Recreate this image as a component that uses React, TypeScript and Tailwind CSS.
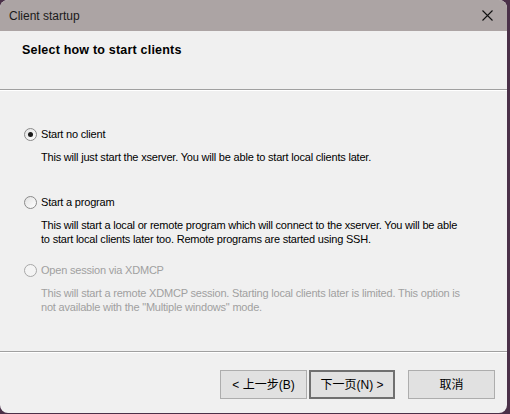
import type { ReactNode } from 'react'

const ui = { fontFamily: '"Liberation Sans", Arial, sans-serif' }
const cjk = { fontFamily: '"Liberation Sans", "Noto Sans CJK SC", sans-serif' }

const Radio = ({ checked, disabled }: { checked?: boolean; disabled?: boolean }) => (
  <span
    className={
      'relative inline-flex h-[13px] w-[13px] shrink-0 items-center justify-center rounded-full border ' +
      (disabled
        ? 'border-[#a8a8a8] bg-[#f4f4f4]'
        : 'border-[#8a8a8a] bg-gradient-to-br from-[#e2e2e2] to-[#ffffff]')
    }
  >
    {checked && <span className="h-[5px] w-[5px] rounded-full bg-[#1a1a1a]" />}
  </span>
)

const Option = ({
  label,
  lines,
  checked,
  disabled,
  className,
}: {
  label: string
  lines: string[]
  checked?: boolean
  disabled?: boolean
  className?: string
}) => (
  <div className={className}>
    <div className="flex h-[14px] items-center pl-[24px]">
      <Radio checked={checked} disabled={disabled} />
      <span
        className={'ml-[4px] text-[11px] tracking-[-0.2px] ' + (disabled ? 'text-[#a0a0a0]' : 'text-black')}
      >
        {label}
      </span>
    </div>
    <div className={'mt-[9px] pl-[41px] text-[11px] tracking-[-0.2px] ' + (disabled ? 'text-[#a0a0a0]' : 'text-black')}>
      {lines.map((l) => (
        <div key={l} className="h-[14px] whitespace-nowrap leading-[14px]">
          {l}
        </div>
      ))}
    </div>
  </div>
)

const Button = ({ children, primary }: { children: ReactNode; primary?: boolean }) => (
  <button
    style={cjk}
    className={
      'flex h-[29px] items-center justify-center bg-[#e1e1e1] text-[12px] text-black ' +
      (primary ? 'w-[86px] border-2 border-[#707070]' : 'w-[87px] border border-[#adadad]')
    }
  >
    {children}
  </button>
)

export default function App() {
  return (
    <div className="h-[414px] w-[510px] overflow-hidden bg-[#4a3048]" style={ui}>
      <div className="flex h-[413px] w-[507px] flex-col overflow-hidden rounded-[8px] bg-[#f0f0f0]">
        {/* Title bar */}
        <div className="flex h-[31px] shrink-0 items-center justify-between bg-[#aca4a4] pl-[9px] pr-[12px]">
          <span className="text-[12px] text-[#1a1a1a]">Client startup</span>
          <svg width="11" height="11" viewBox="0 0 11 11" className="mr-[2px]">
            <path d="M0.5 0.5 L10.5 10.5 M10.5 0.5 L0.5 10.5" stroke="#111" strokeWidth="1.1" />
          </svg>
        </div>

        {/* Header */}
        <div className="flex h-[58px] shrink-0 items-start pl-[22px] pt-[10px]">
          <span className="text-[12.5px] font-bold tracking-[0.2px] text-black">Select how to start clients</span>
        </div>
        <div className="h-px bg-[#a0a0a0]" />
        <div className="h-px bg-white" />

        {/* Options */}
        <div className="h-[260px] shrink-0 pt-[36px]">
          <Option
            checked
            label="Start no client"
            lines={['This will just start the xserver. You will be able to start local clients later.']}
          />
          <Option
            className="mt-[31px]"
            label="Start a program"
            lines={[
              'This will start a local or remote program which will connect to the xserver. You will be able',
              'to start local clients later too. Remote programs are started using SSH.',
            ]}
          />
          <Option
            className="mt-[17px]"
            disabled
            label="Open session via XDMCP"
            lines={[
              'This will start a remote XDMCP session. Starting local clients later is limited. This option is',
              'not available with the "Multiple windows" mode.',
            ]}
          />
        </div>
        <div className="h-px bg-[#a0a0a0]" />
        <div className="h-px bg-white" />

        {/* Footer buttons */}
        <div className="flex pl-[220px] pt-[17px]">
          <Button>&lt; 上一步(B)</Button>
          <div className="ml-[2px]">
            <Button primary>下一页(N) &gt;</Button>
          </div>
          <div className="ml-[13px]">
            <Button>取消</Button>
          </div>
        </div>
      </div>
    </div>
  )
}
